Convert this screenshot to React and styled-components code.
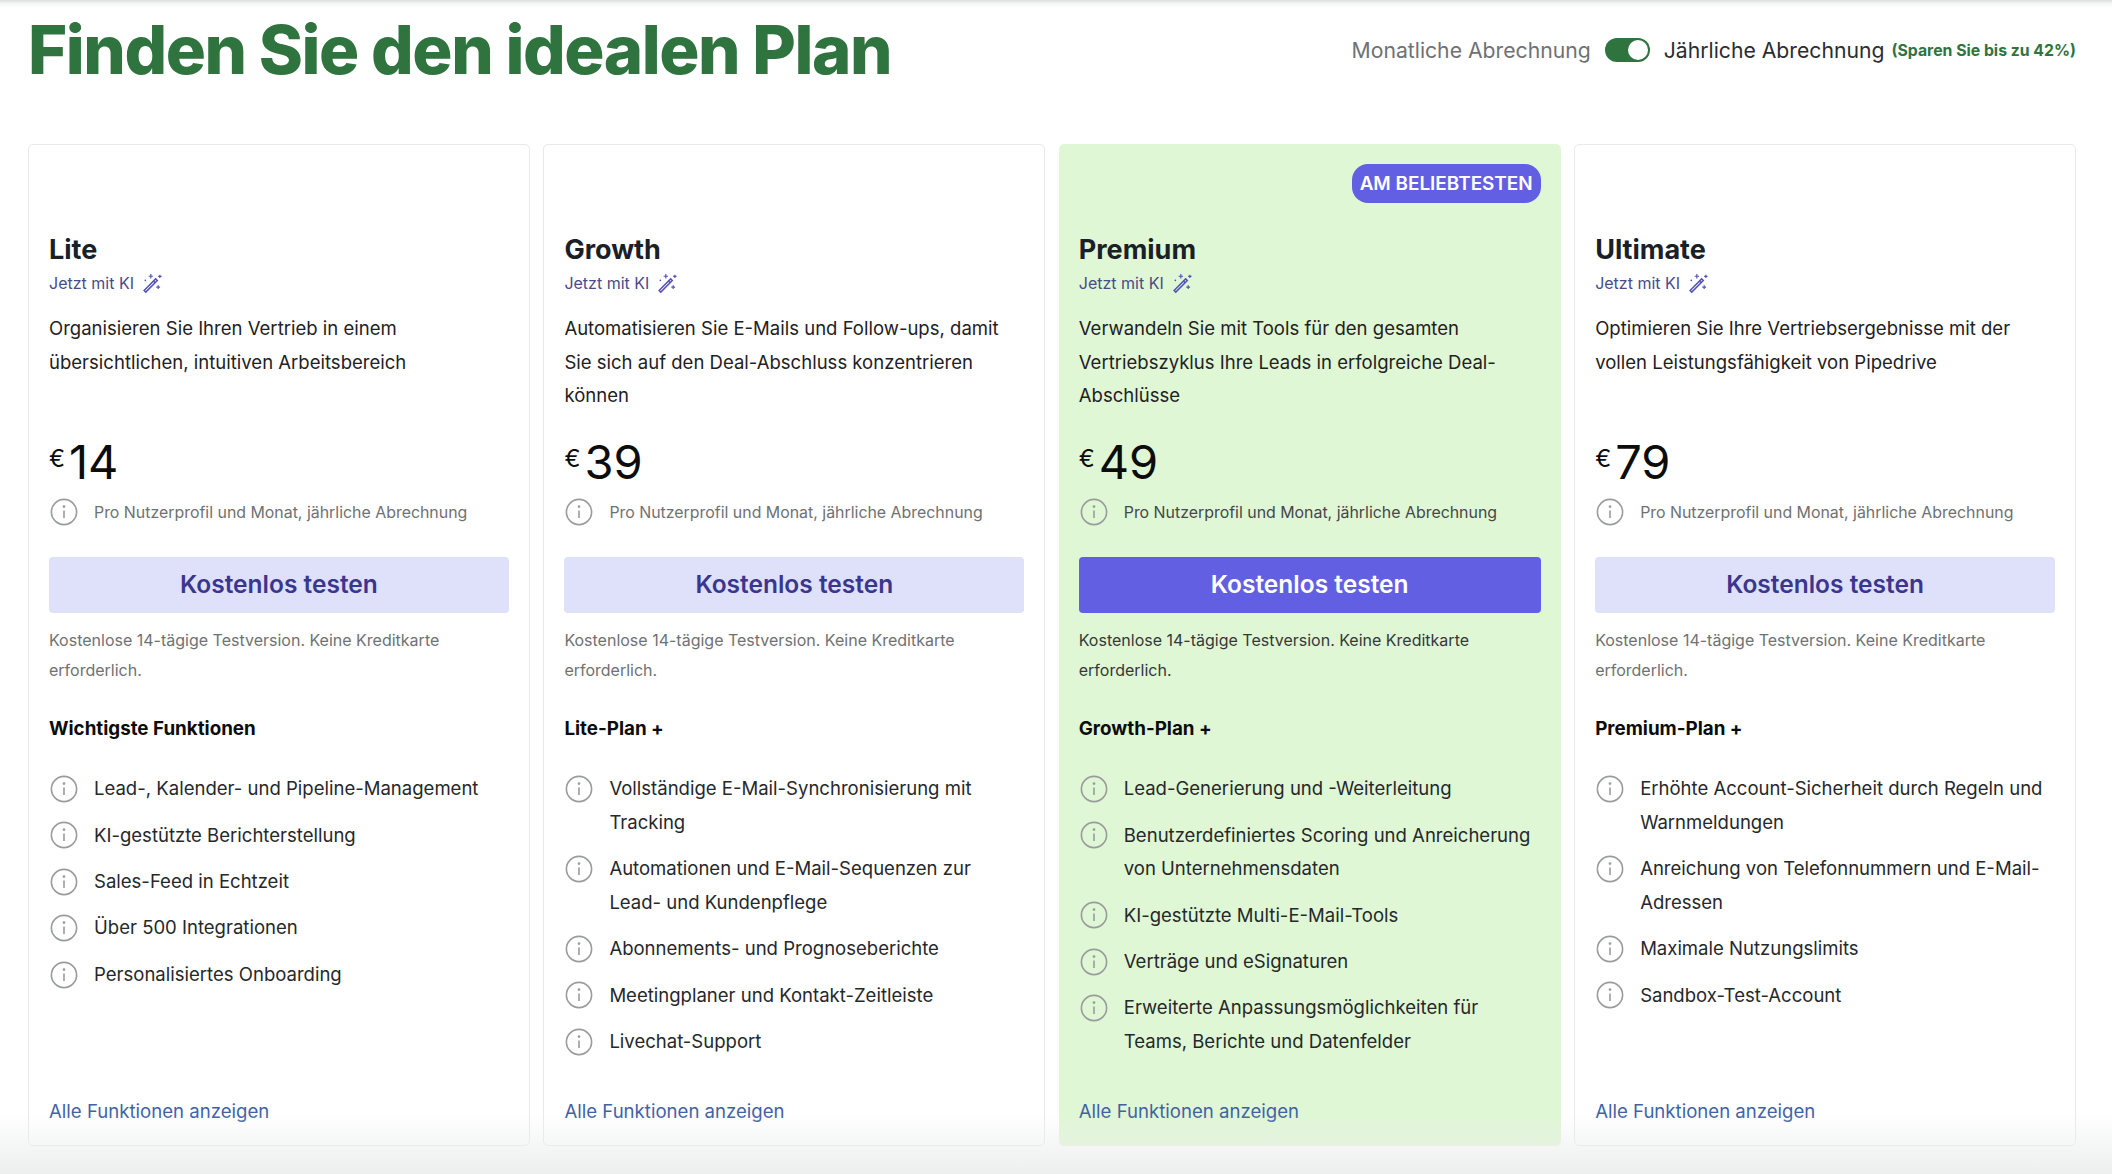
import React from 'react'
import styled, { createGlobalStyle } from 'styled-components'

const plans = [
    {
        name: 'Lite',
        text: 'Organisieren Sie Ihren Vertrieb in einem übersichtlichen, intuitiven Arbeitsbereich',
        price: '14',
        heading: 'Wichtigste Funktionen',
        features: [
            'Lead-, Kalender- und Pipeline-Management',
            'KI-gestützte Berichterstellung',
            'Sales-Feed in Echtzeit',
            'Über 500 Integrationen',
            'Personalisiertes Onboarding',
        ],
    },
    {
        name: 'Growth',
        text: 'Automatisieren Sie E-Mails und Follow-ups, damit Sie sich auf den Deal-Abschluss konzentrieren können',
        price: '39',
        heading: 'Lite-Plan +',
        features: [
            'Vollständige E-Mail-Synchronisierung mit Tracking',
            'Automationen und E-Mail-Sequenzen zur Lead- und Kundenpflege',
            'Abonnements- und Prognoseberichte',
            'Meetingplaner und Kontakt-Zeitleiste',
            'Livechat-Support',
        ],
    },
    {
        name: 'Premium',
        text: 'Verwandeln Sie mit Tools für den gesamten Vertriebszyklus Ihre Leads in erfolgreiche Deal-Abschlüsse',
        price: '49',
        heading: 'Growth-Plan +',
        popular: true,
        features: [
            'Lead-Generierung und -Weiterleitung',
            'Benutzerdefiniertes Scoring und Anreicherung von Unternehmensdaten',
            'KI-gestützte Multi-E-Mail-Tools',
            'Verträge und eSignaturen',
            'Erweiterte Anpassungsmöglichkeiten für Teams, Berichte und Datenfelder',
        ],
    },
    {
        name: 'Ultimate',
        text: 'Optimieren Sie Ihre Vertriebsergebnisse mit der vollen Leistungsfähigkeit von Pipedrive',
        price: '79',
        heading: 'Premium-Plan +',
        features: [
            'Erhöhte Account-Sicherheit durch Regeln und Warnmeldungen',
            'Anreichung von Telefonnummern und E-Mail-Adressen',
            'Maximale Nutzungslimits',
            'Sandbox-Test-Account',
        ],
    },
]

const GlobalStyle = createGlobalStyle`
    html, body {
        margin: 0;
        padding: 0;
        background: #fff;
    }
    body {
        font-family: Inter, "Noto Sans", sans-serif;
        color: #1b1d1f;
    }
`
const Page = styled.div`
    position: relative;
    height: 1174px;
    box-sizing: border-box;
    padding: 0 36px 0 28px;
    overflow: hidden;
`
const TopShade = styled.div`
    position: absolute;
    top: 0;
    left: 0;
    right: 0;
    height: 8px;
    background: linear-gradient(#dcdddd, #f4f4f4 40%, #fff);
    pointer-events: none;
`
const BottomShade = styled.div`
    position: absolute;
    left: 0;
    right: 0;
    bottom: 0;
    height: 60px;
    background: linear-gradient(rgba(236, 237, 237, 0), rgba(236, 237, 237, 0.95));
    pointer-events: none;
`
const Header = styled.header`
    display: flex;
    align-items: center;
    justify-content: space-between;
    height: 100px;
    margin-bottom: 44px;
`
const Title = styled.h1`
    margin: 0;
    font-size: 67px;
    line-height: 100px;
    font-weight: 800;
    letter-spacing: -1.45px;
    color: #2f733f;
`
const Billing = styled.div`
    display: flex;
    align-items: center;
`
const BillingLabel = styled.span`
    font-size: 21.2px;
    color: ${p => (p.$active ? '#2b2d2f' : '#6f7173')};
`
const Toggle = styled.span`
    display: flex;
    justify-content: flex-end;
    align-items: center;
    box-sizing: border-box;
    width: 45px;
    height: 24px;
    margin: 0 14px;
    padding: 2px;
    border-radius: 12px;
    background: #2f733f;
`
const Knob = styled.span`
    width: 20px;
    height: 20px;
    border-radius: 50%;
    background: #fff;
`
const Saving = styled.span`
    margin-left: 7px;
    font-size: 15.8px;
    font-weight: 700;
    color: #2f733f;
`
const Plans = styled.div`
    display: grid;
    grid-template-columns: repeat(4, 1fr);
    gap: 13.5px;
    height: 1002px;
`
const Card = styled.section`
    position: relative;
    display: flex;
    flex-direction: column;
    box-sizing: border-box;
    padding: ${p => (p.$popular ? '89px 20px 22px' : '88px 20px 21px')};
    border: ${p => (p.$popular ? 'none' : '1px solid #e8e9ea')};
    border-radius: 5px;
    background: ${p => (p.$popular ? '#dff7d4' : '#fff')};
`
const Badge = styled.span`
    position: absolute;
    top: 20px;
    right: 20px;
    padding: 0 8px;
    height: 39px;
    line-height: 39px;
    border-radius: 16px;
    background: #635fe2;
    color: #fff;
    font-size: 18.9px;
    font-weight: 600;
`
const PlanName = styled.h2`
    margin: 0;
    font-size: 27px;
    line-height: 34px;
    font-weight: 700;
    color: #1a2028;
`
const AiRow = styled.div`
    display: flex;
    align-items: center;
    gap: 8px;
    height: 22px;
    margin-top: 5px;
    font-size: 16px;
    color: #4a4a8c;
`
const Description = styled.p`
    min-height: 101px;
    margin: 18px 0 0;
    font-size: 18.55px;
    line-height: 33.6px;
    color: #1f2123;
`
const Price = styled.div`
    display: flex;
    align-items: flex-start;
    height: 56px;
    margin-top: 22px;
    font-size: 47px;
    line-height: 54px;
    color: #0c0c0c;
`
const Currency = styled.span`
    margin-right: 4px;
    font-size: 24px;
    line-height: 48px;
`
const PriceNote = styled.div`
    display: flex;
    align-items: center;
    gap: 15px;
    height: 24px;
    margin-top: 9px;
    font-size: 15.9px;
    color: ${p => (p.$popular ? '#45484a' : '#6f7173')};
`
const CtaButton = styled.button`
    display: block;
    width: 100%;
    height: 56px;
    margin-top: 33px;
    padding: 0 0 2px;
    border: 0;
    border-radius: 4px;
    font-family: inherit;
    font-size: 24.5px;
    font-weight: 600;
    background: ${p => (p.$popular ? '#635fe2' : '#dfe0f9')};
    color: ${p => (p.$popular ? '#fff' : '#3a3690')};
`
const Trial = styled.p`
    margin: 13px 0 0;
    font-size: 16px;
    line-height: 29.6px;
    color: ${p => (p.$popular ? '#35383a' : '#6f7173')};
`
const FeatureHeading = styled.h3`
    margin: 32px 0 0;
    font-size: 18.8px;
    line-height: 24px;
    font-weight: 700;
    color: #0c0c0c;
`
const FeatureList = styled.ul`
    display: flex;
    flex-direction: column;
    gap: 12.8px;
    margin: 31px 0 0;
    padding: 0;
    list-style: none;
`
const Feature = styled.li`
    display: flex;
    gap: 15px;
    font-size: 18.55px;
    line-height: 33.6px;
    color: #26282a;
`
const IconSlot = styled.span`
    flex: none;
    display: flex;
    align-items: center;
    height: 33.6px;
`
const ShowAll = styled.a`
    margin-top: auto;
    font-size: 18.6px;
    line-height: 26px;
    color: #3f62a5;
`

const InfoIcon = () => (
    <svg width="30" height="30" viewBox="0 0 30 30" fill="none" stroke="#999b9c" strokeWidth="1.6" style={{ flex: 'none' }}>
        <circle cx="15" cy="15" r="12.6" />
        <path d="M15 13.5v7.5" />
        <circle cx="15" cy="9.6" r="0.6" fill="#999b9c" />
    </svg>
)

const WandIcon = () => (
    <svg width="21" height="21" viewBox="0 0 20 20" fill="none" stroke="#5450b8" strokeWidth="1.4">
        <path d="M2 16.6 13 5.6l1.6 1.6-11 11z" />
        <path d="M10.9 7.7l1.6 1.6" />
        <path d="M8.4 1v4.2M6.3 3.1h4.2M17 1.6v3.2M15.4 3.2h3.2M15.4 11.6v3.6M13.6 13.4h3.6" strokeWidth="1.1" />
        <circle cx="3.2" cy="7" r="0.8" fill="#5450b8" stroke="none" />
    </svg>
)

const PlanCard = ({ plan }) => (
    <Card $popular={plan.popular}>
        {plan.popular && <Badge>AM BELIEBTESTEN</Badge>}
        <PlanName>{plan.name}</PlanName>
        <AiRow>Jetzt mit KI <WandIcon /></AiRow>
        <Description>{plan.text}</Description>
        <Price><Currency>€</Currency>{plan.price}</Price>
        <PriceNote $popular={plan.popular}>
            <InfoIcon />
            Pro Nutzerprofil und Monat, jährliche Abrechnung
        </PriceNote>
        <CtaButton $popular={plan.popular}>Kostenlos testen</CtaButton>
        <Trial $popular={plan.popular}>Kostenlose 14-tägige Testversion. Keine Kreditkarte erforderlich.</Trial>
        <FeatureHeading>{plan.heading}</FeatureHeading>
        <FeatureList>
            {plan.features.map(feature => (
                <Feature key={feature}>
                    <IconSlot><InfoIcon /></IconSlot>
                    <span>{feature}</span>
                </Feature>
            ))}
        </FeatureList>
        <ShowAll>Alle Funktionen anzeigen</ShowAll>
    </Card>
)

export default function App() {
    return (
        <Page>
            <GlobalStyle />
            <TopShade />
            <Header>
                <Title>Finden Sie den idealen Plan</Title>
                <Billing>
                    <BillingLabel>Monatliche Abrechnung</BillingLabel>
                    <Toggle><Knob /></Toggle>
                    <BillingLabel $active>Jährliche Abrechnung</BillingLabel>
                    <Saving>(Sparen Sie bis zu 42%)</Saving>
                </Billing>
            </Header>
            <Plans>
                {plans.map(plan => <PlanCard key={plan.name} plan={plan} />)}
            </Plans>
            <BottomShade />
        </Page>
    )
}
